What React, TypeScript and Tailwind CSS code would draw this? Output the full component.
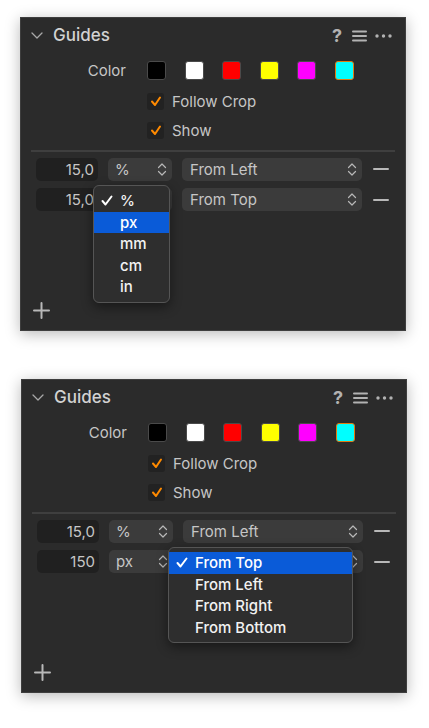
const swatches = [
  { color: '#000000' },
  { color: '#ffffff' },
  { color: '#ff0000' },
  { color: '#ffff00' },
  { color: '#ff00ff' },
  { color: '#00ffff', selected: true },
];

function Stepper() {
  return (
    <svg width="10" height="15" viewBox="0 0 10 15" fill="none" stroke="#b8b8b8" strokeWidth="1.2" strokeLinecap="round" strokeLinejoin="round">
      <path d="M1.5 5.5 L5 2 L8.5 5.5" />
      <path d="M1.5 9.5 L5 13 L8.5 9.5" />
    </svg>
  );
}

function Check() {
  return (
    <svg width="12" height="11" viewBox="0 0 12 11" fill="none" stroke="#ffffff" strokeWidth="2" strokeLinecap="round" strokeLinejoin="round">
      <path d="M1.5 6 L4.5 9.5 L10.5 1.5" />
    </svg>
  );
}

function Checkbox({ label }: { label: string }) {
  return (
    <div className="h-[17px] flex items-center gap-[8px]">
      <div className="w-[17px] h-[17px] rounded-[3px] bg-[#222222] flex items-center justify-center">
        <svg width="12" height="11" viewBox="0 0 12 11" fill="none" stroke="#ff8a00" strokeWidth="2" strokeLinecap="round" strokeLinejoin="round">
          <path d="M2 5.5 L5 9 L10 1.5" />
        </svg>
      </div>
      <span className="text-[15px] leading-none text-[#c6c6c6]">{label}</span>
    </div>
  );
}

function Menu({ items, active, className }: { items: string[]; active: number; className: string }) {
  return (
    <div className={`absolute rounded-[6px] border border-[#555555] bg-[#2e2e2e] py-[4px] shadow-[0_4px_12px_rgba(0,0,0,0.45)] overflow-hidden ${className}`}>
      {items.map((item, i) => (
        <div
          key={item}
          className={`h-[21.5px] flex items-center text-[15px] leading-none font-medium text-[#f2f2f2] ${i === active ? 'bg-[#0a5bd8] text-white' : ''}`}
        >
          <span className="w-[26px] pl-[7px] flex items-center">{i === 0 ? <Check /> : null}</span>
          <span>{item}</span>
        </div>
      ))}
    </div>
  );
}

function GuideRow({ value, unit, from }: { value: string; unit: string; from: string }) {
  return (
    <div className="flex items-center h-[23px] pl-[15px] text-[15px] leading-none text-[#c6c6c6]">
      <div className="w-[62px] h-[23px] rounded-[5px] bg-[#202020] flex items-center justify-end pr-[4px]">
        {value}
      </div>
      <div className="ml-[10px] w-[64px] h-[23px] rounded-[5px] bg-[#3b3b3b] flex items-center justify-between pl-[7px] pr-[5px]">
        <span>{unit}</span>
        <Stepper />
      </div>
      <div className="ml-[10px] w-[180px] h-[23px] rounded-[5px] bg-[#3b3b3b] flex items-center justify-between pl-[8px] pr-[5px]">
        <span>{from}</span>
        <Stepper />
      </div>
      <div className="ml-[11px] w-[16px] h-[2px] bg-[#b8b8b8] rounded-full" />
    </div>
  );
}

function Panel({ second }: { second?: boolean }) {
  return (
    <div className="relative w-[386px] h-[314px] bg-[#2b2b2b] border border-[#3e3e3e] shadow-[0_3px_14px_rgba(0,0,0,0.28)]">
      {/* header */}
      <div className="h-[35px] flex items-center pl-[10px] pr-[13px]">
        <svg width="12" height="7" viewBox="0 0 12 7" fill="none" stroke="#a8a8a8" strokeWidth="1.3" strokeLinecap="round" strokeLinejoin="round">
          <path d="M1 1 L6 6 L11 1" />
        </svg>
        <span className="ml-[10px] text-[17px] font-medium text-[#d2d2d2]">Guides</span>
        <div className="ml-auto flex items-center">
          <span className="text-[18px] font-bold text-[#b2b2b2] leading-none">?</span>
          <svg className="ml-[10px]" width="15" height="12" viewBox="0 0 15 12" fill="#b2b2b2">
            <rect x="0" y="0.5" width="15" height="2" rx="1" />
            <rect x="0" y="5" width="15" height="2" rx="1" />
            <rect x="0" y="9.5" width="15" height="2" rx="1" />
          </svg>
          <svg className="ml-[8px]" width="17" height="4" viewBox="0 0 17 4" fill="#b2b2b2">
            <circle cx="2" cy="2" r="1.7" />
            <circle cx="8.5" cy="2" r="1.7" />
            <circle cx="15" cy="2" r="1.7" />
          </svg>
        </div>
      </div>

      {/* colour */}
      <div className="mt-[8px] flex items-center h-[19px]">
        <span className="w-[105px] text-right text-[15px] leading-none text-[#c6c6c6]">Color</span>
        <div className="ml-[21px] flex items-center gap-[18.5px]">
          {swatches.map((s) => (
            <div
              key={s.color}
              className={`w-[19px] h-[19px] rounded-[3px] ${s.selected ? 'border-[1.5px] border-[#e07a10]' : 'border border-[#4a4a4a]'}`}
              style={{ backgroundColor: s.color }}
            />
          ))}
        </div>
      </div>

      <div className="mt-[13px] pl-[126px] flex flex-col gap-[11.7px]">
        <Checkbox label="Follow Crop" />
        <Checkbox label="Show" />
      </div>

      <div className="mt-[11px] mx-[10px] h-[2px] bg-[#3f3f3f]" />

      <div className="mt-[6px] flex flex-col gap-[7.5px]">
        <GuideRow value="15,0" unit="%" from="From Left" />
        {second ? <GuideRow value="150" unit="px" from="From Top" /> : <GuideRow value="15,0" unit="%" from="From Top" />}
      </div>

      <div className="absolute left-[12px] bottom-[11px]">
        <svg width="17" height="17" viewBox="0 0 17 17" fill="none" stroke="#b8b8b8" strokeWidth="2" strokeLinecap="round">
          <path d="M8.5 1 V16 M1 8.5 H16" />
        </svg>
      </div>

      {second ? (
        <Menu items={['From Top', 'From Left', 'From Right', 'From Bottom']} active={0} className="left-[146px] top-[167px] w-[185px]" />
      ) : (
        <Menu items={['%', 'px', 'mm', 'cm', 'in']} active={1} className="left-[72px] top-[167px] w-[77px]" />
      )}
    </div>
  );
}

export default function App() {
  return (
    <div className="min-h-[728px] bg-white font-['Inter',sans-serif] pt-[17px]">
      <div className="ml-[20px]">
        <Panel />
      </div>
      <div className="ml-[21px] mt-[48px]">
        <Panel second />
      </div>
    </div>
  );
}
